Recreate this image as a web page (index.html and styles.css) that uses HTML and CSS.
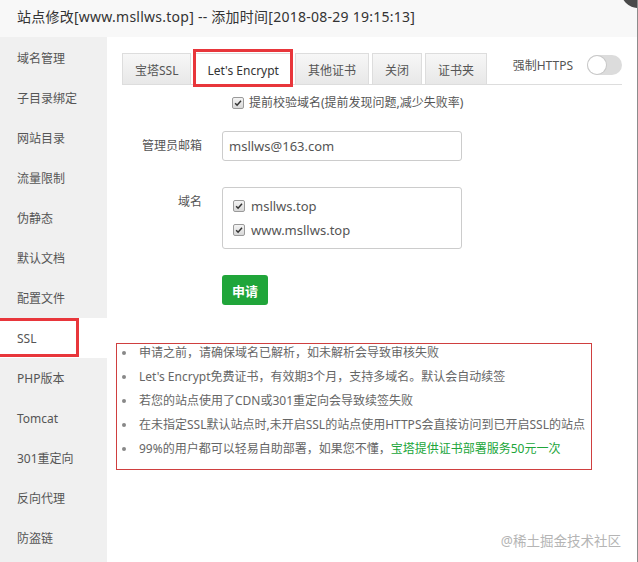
FILE: index.html
```html
<!DOCTYPE html>
<html>
<head>
<meta charset="utf-8">
<link rel="stylesheet" href="styles.css">
</head>
<body>
<div class="dialog">
  <div class="header">站点修改[www.msllws.top] -- 添加时间[2018-08-29 19:15:13]</div>
  <span class="close"></span>
  <div class="body">
    <ul class="side">
      <li>域名管理</li>
      <li>子目录绑定</li>
      <li>网站目录</li>
      <li>流量限制</li>
      <li>伪静态</li>
      <li>默认文档</li>
      <li>配置文件</li>
      <li class="active">SSL</li>
      <li>PHP版本</li>
      <li>Tomcat</li>
      <li>301重定向</li>
      <li>反向代理</li>
      <li>防盗链</li>
    </ul>
    <div class="main">
      <div class="tabs">
        <span class="tab">宝塔SSL</span>
        <span class="tab active">Let's Encrypt</span>
        <span class="tab">其他证书</span>
        <span class="tab">关闭</span>
        <span class="tab">证书夹</span>
        <div class="force">
          <span>强制HTTPS</span>
          <span class="toggle"><span class="knob"></span></span>
        </div>
      </div>
      <div class="precheck">
        <span class="cb"><svg viewBox="0 0 12 12" width="12" height="12"><path d="M2.6 6.2 L4.9 8.6 L9.6 3.2" fill="none" stroke="#333" stroke-width="1.8"/></svg></span>
        <span>提前校验域名(提前发现问题,减少失败率)</span>
      </div>
      <div class="row row-email">
        <label class="lbl">管理员邮箱</label>
        <div class="input">msllws@163.com</div>
      </div>
      <div class="row row-domain">
        <label class="lbl">域名</label>
        <div class="domains">
          <div class="dom"><span class="cb"><svg viewBox="0 0 12 12" width="12" height="12"><path d="M2.6 6.2 L4.9 8.6 L9.6 3.2" fill="none" stroke="#333" stroke-width="1.8"/></svg></span>msllws.top</div>
          <div class="dom"><span class="cb"><svg viewBox="0 0 12 12" width="12" height="12"><path d="M2.6 6.2 L4.9 8.6 L9.6 3.2" fill="none" stroke="#333" stroke-width="1.8"/></svg></span>www.msllws.top</div>
        </div>
      </div>
      <button class="apply">申请</button>
      <ul class="tips">
        <li>申请之前，请确保域名已解析，如未解析会导致审核失败</li>
        <li>Let's Encrypt免费证书，有效期3个月，支持多域名。默认会自动续签</li>
        <li>若您的站点使用了CDN或301重定向会导致续签失败</li>
        <li>在未指定SSL默认站点时,未开启SSL的站点使用HTTPS会直接访问到已开启SSL的站点</li>
        <li>99%的用户都可以轻易自助部署，如果您不懂，<span class="green">宝塔提供证书部署服务50元一次</span></li>
      </ul>
    </div>
  </div>
  <div class="watermark">@稀土掘金技术社区</div>
</div>
</body>
</html>
```

FILE: styles.css
```css
html, body {
  margin: 0;
  padding: 0;
  background: #fff;
}
body {
  font-family: "Noto Sans", "Noto Sans CJK SC", sans-serif;
  color: #555;
}
.dialog {
  position: relative;
  width: 638px;
  height: 562px;
  box-sizing: border-box;
  border-right: 1px solid #8c8c8c;
  display: flex;
  flex-direction: column;
  overflow: hidden;
}
.header {
  height: 37px;
  line-height: 34px;
  padding-left: 17px;
  background: #f8f8f8;
  font-size: 14px;
  letter-spacing: 0.25px;
  color: #333;
  flex: none;
}
.close {
  position: absolute;
  top: -26px;
  right: -18px;
  width: 34px;
  height: 34px;
  border-radius: 50%;
  background: #4a4a4a;
}
.body {
  display: flex;
  flex: 1;
}
.side {
  width: 107px;
  flex: none;
  margin: 0;
  padding: 1px 0 0;
  list-style: none;
  background: #f0f0f0;
}
.side li {
  height: 40px;
  line-height: 42px;
  padding-left: 17px;
  font-size: 12px;
  color: #555;
}
.side li.active {
  position: relative;
  background: #fff;
}
.side li.active::after {
  content: "";
  position: absolute;
  left: -3px;
  top: 0;
  width: 82px;
  height: 39px;
  box-sizing: border-box;
  border: 3px solid #e8363b;
}
.main {
  flex: 1;
  padding: 16px 15px 0 15px;
  display: flex;
  flex-direction: column;
  align-items: flex-start;
}
.tabs {
  align-self: stretch;
  display: flex;
  align-items: flex-start;
  gap: 3px;
  height: 31px;
  border-bottom: 1px solid #ddd;
}
.tab {
  height: 31px;
  box-sizing: border-box;
  padding: 3px 12px 0;
  line-height: 27px;
  font-size: 12px;
  color: #555;
  border: 1px solid #ddd;
  border-bottom: none;
  background: linear-gradient(#f7f7f7, #e8e8e8);
}
.tab.active {
  position: relative;
  background: #fff;
  height: 32px;
  color: #333;
}
.tab.active::after {
  content: "";
  position: absolute;
  left: -2px;
  right: -2px;
  top: -5px;
  bottom: -2px;
  border: 3px solid #e8363b;
}
.force {
  margin-left: auto;
  margin-top: 2px;
  display: flex;
  align-items: center;
  gap: 14px;
  font-size: 12px;
  color: #555;
}
.toggle {
  width: 35px;
  height: 20px;
  border-radius: 10px;
  background: #dcdcdc;
  display: flex;
  align-items: center;
  padding-left: 1px;
  box-sizing: border-box;
}
.knob {
  width: 18px;
  height: 18px;
  border-radius: 50%;
  background: #fff;
  box-shadow: 0 0 0 1px #c8c8c8;
}
.cb {
  width: 12px;
  height: 12px;
  box-sizing: border-box;
  border: 1px solid #9a9a9a;
  border-radius: 2px;
  background: linear-gradient(#f4f4f4, #d8d8d8);
  display: inline-flex;
  align-items: center;
  justify-content: center;
  flex: none;
}
.cb svg {
  width: 10px;
  height: 10px;
}
.precheck {
  margin: 9px 0 0 110px;
  display: flex;
  align-items: center;
  gap: 5px;
  font-size: 12px;
  line-height: 18px;
  color: #555;
}
.row {
  display: flex;
  align-items: flex-start;
  gap: 20px;
}
.row-email {
  margin-top: 19px;
}
.row-domain {
  margin-top: 26px;
}
.lbl {
  width: 80px;
  text-align: right;
  font-size: 12px;
  line-height: 30px;
  color: #555;
}
.input {
  width: 240px;
  height: 30px;
  box-sizing: border-box;
  border: 1px solid #ccc;
  border-radius: 3px;
  padding-left: 6px;
  line-height: 28px;
  font-size: 13px;
  color: #555;
}
.domains {
  width: 240px;
  height: 62px;
  box-sizing: border-box;
  border: 1px solid #ccc;
  border-radius: 3px;
  padding: 6px 10px;
}
.dom {
  display: flex;
  align-items: center;
  gap: 6px;
  height: 24px;
  font-size: 13px;
  color: #555;
}
.apply {
  margin: 26px 0 0 100px;
  width: 46px;
  height: 30px;
  border: none;
  border-radius: 3px;
  background: #20a53a;
  color: #fff;
  font-family: inherit;
  font-size: 13px;
  font-weight: bold;
  padding: 0;
}
.tips {
  margin: 38px 0 0 -6px;
  width: 476px;
  box-sizing: border-box;
  border: 1px solid #cf3f3f;
  padding: 0 0 5px;
  list-style: none;
}
.tips li {
  display: flex;
  align-items: center;
  line-height: 18px;
  margin-bottom: 6px;
  font-size: 12px;
  color: #666;
  white-space: nowrap;
}
.tips li::before {
  content: "";
  width: 4px;
  height: 4px;
  border-radius: 50%;
  background: #888;
  margin: 0 13px 0 5px;
  flex: none;
}
.green {
  color: #20a53a;
}
.watermark {
  position: absolute;
  right: 16px;
  bottom: 12px;
  font-size: 13.5px;
  color: #b5b5b5;
}
```
